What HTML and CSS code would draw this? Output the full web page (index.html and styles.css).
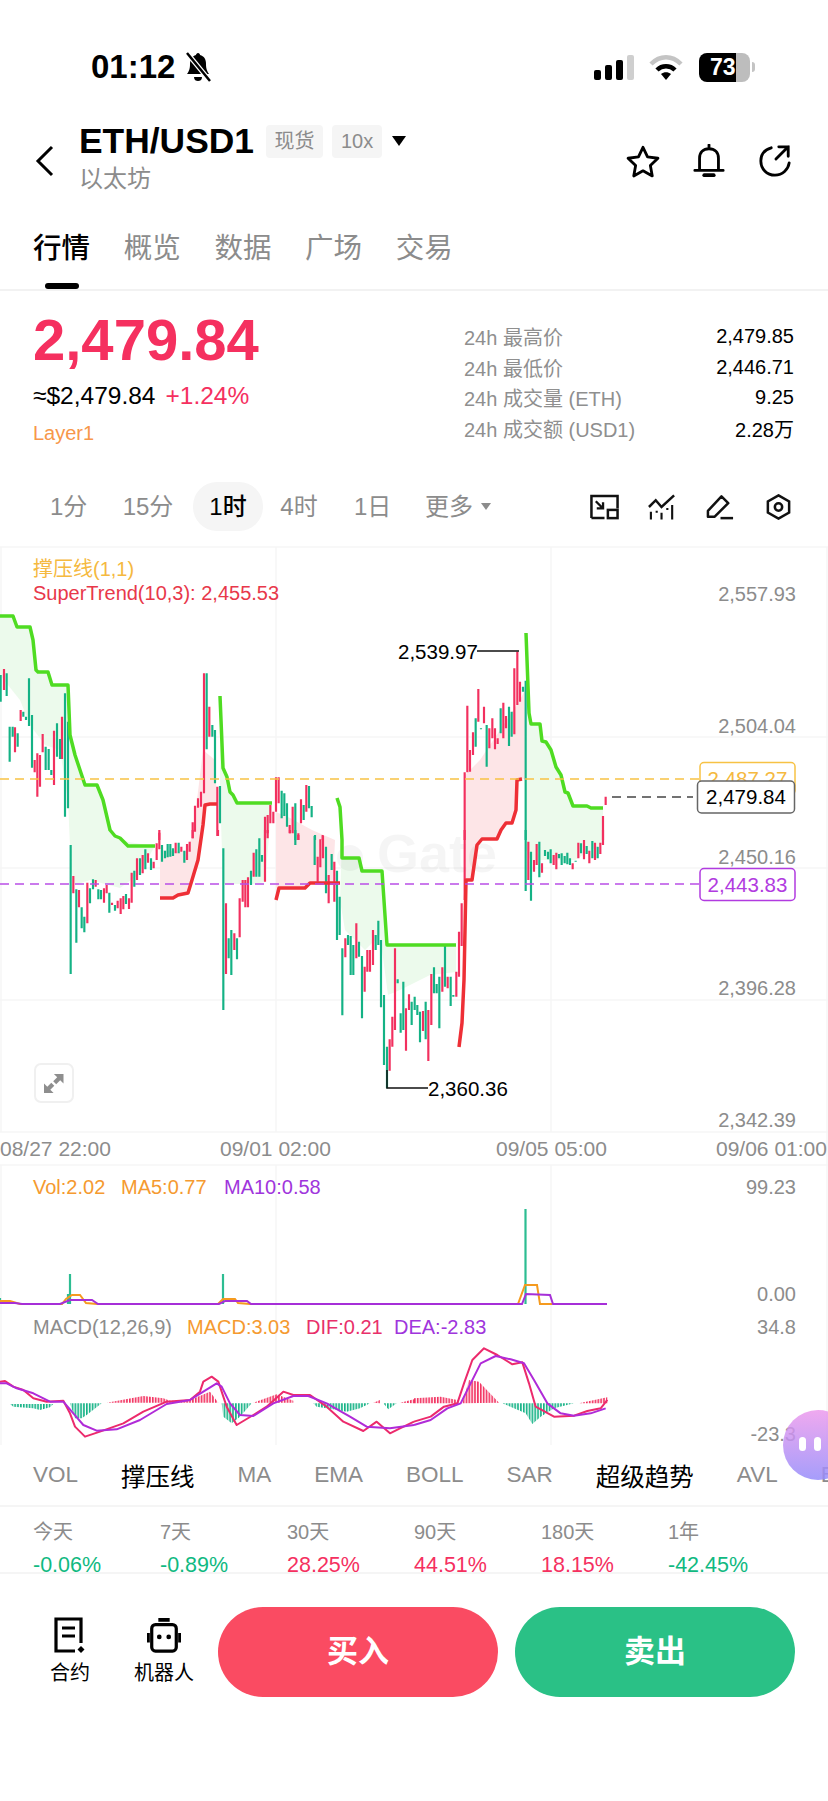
FILE: index.html
```html
<!DOCTYPE html>
<html>
<head>
    <title>ETH/USD1</title>
    <link rel="stylesheet" href="styles.css">
</head>
<body>
<div class="phone">
    <div class="status">
        <div class="status-left">
            <span class="clock">01:12</span>
            <svg class="mute" viewBox="0 0 28 30"><path d="M14 1c1.300 0 2 1 2 2 4 1 6 4 6 9 0 5 1 7 3 10H3c2-3 3-5 3-10 0-5 2-8 6-9 0-1 1-2 2-2z" fill="#000"/><path d="M10 25h8c0 3-2 4-4 4s-4-1-4-4z" fill="#000"/><path d="M3 1l23 28" stroke="#fff" stroke-width="5"/><path d="M3 1l23 28" stroke="#000" stroke-width="2.500"/></svg>
        </div>
        <div class="status-right">
            <svg class="signal" viewBox="0 0 40 25"><rect x="0" y="15" width="7" height="10" rx="2"/><rect x="11" y="10" width="7" height="15" rx="2"/><rect x="22" y="5" width="7" height="20" rx="2"/><rect x="33" y="0" width="7" height="25" rx="2" fill="#cfcfcf"/></svg>
            <svg class="wifi" viewBox="0 0 34 25"><path d="M2 9c9-9 21-9 30 0" fill="none" stroke="#c4c4c4" stroke-width="4.500"/><path d="M8 15c5-5 13-5 18 0" fill="none" stroke="#000" stroke-width="4.500"/><path d="M12 19c3-2.500 7-2.500 10 0l-5 6z"/></svg>
            <div class="battery">73</div>
            <div class="battery-nub"></div>
        </div>
    </div>

    <header class="pair">
        <svg class="back" viewBox="0 0 20 32"><path d="M17 2L3 16l14 14" fill="none" stroke="#000" stroke-width="3"/></svg>
        <div class="pair-name">
            <div class="pair-top">
                <h1>ETH/USD1</h1>
                <span class="chip chip-spot">现货</span>
                <span class="chip chip-lev">10x</span>
                <span class="caret"></span>
            </div>
            <div class="pair-sub">以太坊</div>
        </div>
        <div class="pair-icons">
            <svg class="pair-icon" viewBox="0 0 36 34"><path d="M18 2.500l4.800 10.200 11 1.400-8 7.700 2 11-9.800-5.400-9.800 5.400 2-11-8-7.700 11-1.400z" fill="none" stroke="#000" stroke-width="3" stroke-linejoin="round"/></svg>
            <svg class="pair-icon" viewBox="0 0 36 36"><path d="M18 1v4M8 27V15c0-6 4-10 10-10s10 4 10 10v12M3 28h30" fill="none" stroke="#000" stroke-width="3" stroke-linecap="round"/><path d="M13 33h10" stroke="#000" stroke-width="4" stroke-linecap="round"/></svg>
            <svg class="pair-icon" viewBox="0 0 36 36"><path d="M14 4C7 6 3 11 3 18c0 8 6 15 15 15 8 0 14-6 15-13" fill="none" stroke="#000" stroke-width="3" stroke-linecap="round"/><path d="M19 16L32 3M22 3h10v10" fill="none" stroke="#000" stroke-width="3" stroke-linecap="round"/></svg>
        </div>
    </header>

    <nav class="tabs">
        <a class="tab tab-on">行情</a>
        <a class="tab">概览</a>
        <a class="tab">数据</a>
        <a class="tab">广场</a>
        <a class="tab">交易</a>
    </nav>

    <section class="summary">
        <div class="price-box">
            <div class="price">2,479.84</div>
            <div class="price-sub"><span>≈$2,479.84</span><span class="up">+1.24%</span></div>
            <div class="sector">Layer1</div>
        </div>
        <div class="stats">
            <div class="stat"><span class="stat-label">24h 最高价</span><span>2,479.85</span></div>
            <div class="stat"><span class="stat-label">24h 最低价</span><span>2,446.71</span></div>
            <div class="stat"><span class="stat-label">24h 成交量 (ETH)</span><span>9.25</span></div>
            <div class="stat"><span class="stat-label">24h 成交额 (USD1)</span><span>2.28万</span></div>
        </div>
    </section>

    <section class="intervals">
        <a class="iv iv-1">1分</a>
        <a class="iv iv-2">15分</a>
        <a class="iv iv-on">1时</a>
        <a class="iv iv-4">4时</a>
        <a class="iv iv-5">1日</a>
        <a class="iv iv-more">更多<i class="iv-caret"></i></a>
        <div class="tools">
            <svg class="tool" viewBox="0 0 30 26"><path d="M1.500 24.500V1.500h27v13M15 24.500H1.500" fill="none" stroke="#111" stroke-width="2.600"/><rect x="18.500" y="16" width="10" height="8.500" fill="none" stroke="#111" stroke-width="2.600"/><path d="M6 7l7 7M13.500 8v6.500H7" fill="none" stroke="#111" stroke-width="2.400"/></svg>
            <svg class="tool" viewBox="0 0 30 26"><path d="M1 13l7-7 6 7L27 1" fill="none" stroke="#111" stroke-width="2.600"/><path d="M3 18v8M14 19v7M25 11v15M9 17v2M20 14v2" stroke="#111" stroke-width="2.200"/></svg>
            <svg class="tool" viewBox="0 0 30 26"><path d="M2 23V17L16 2l7 7L9 23z" fill="none" stroke="#111" stroke-width="2.600" stroke-linejoin="round"/><path d="M15 24.500h13" stroke="#111" stroke-width="2.600"/></svg>
            <svg class="tool" viewBox="0 0 30 26"><path d="M15 1l11 6.200v11.600L15 25 4 18.800V7.200z" fill="none" stroke="#111" stroke-width="2.600"/><circle cx="15" cy="13" r="3.800" fill="none" stroke="#111" stroke-width="2.600"/></svg>
        </div>
    </section>

    <section class="chart">
        <svg class="chart-svg" viewBox="0 546 828 899">
            <defs>
                <pattern id="stripe-r" patternUnits="userSpaceOnUse" width="8.600" height="10"><rect width="5" height="10" fill="#f2305f"/></pattern>
                <pattern id="stripe-g" patternUnits="userSpaceOnUse" width="8.600" height="10"><rect width="5" height="10" fill="#14b285"/></pattern>
            </defs>

            <!-- grid -->
            <path class="grid" d="M0 547H828M0 737H828M0 868H828M0 1000H828M0 1132H828M0 1165H828M276 547V1132M551 547V1132M827 547V1445M1 547V1132M276 1165V1445M551 1165V1445M1 1165V1445"/>

            <!-- supertrend fills -->
            <path class="fill-g" d="M0 616L13 616 17 627 30 627 33 640 36 670 48 672 52 685 68 685 70 735 75 755 80 770 85 785 97 785 103 800 110 830 120 838 128 842 155 846 138 875 120 888 90 880 75 885 71 870 68 800 60 750 45 745 30 725 20 700 0 675Z"/>
            <path class="fill-g" d="M220 696L223 768 227 777 230 792 233 795 237 803 272 803 265 882 253 884 223 884 220 790Z"/>
            <path class="fill-g" d="M342 840L342 858 359 858 362 871 382 871 387 945 456 945 456 972 430 975 400 990 388 995 380 935 365 950 345 930 340 900Z"/>
            <path class="fill-g" d="M526 633L529 713 531 724 540 724 542 741 546 742 551 750 556 767 561 775 565 792 568 793 573 806 587 806 591 808 603 808 603 843 575 860 530 860 526 850Z"/>
            <path class="fill-r" d="M160 850L185 852 193 835 197 800 203 750 215 760 217 804 205 805 203 825 198 860 192 880 188 893 178 895 173 898 160 898Z"/>
            <path class="fill-r" d="M276 812L290 818 312 830 335 840 333 883 310 883 307 887 279 888 276 900Z"/>
            <path class="fill-r" d="M465 775L480 760 520 700 525 690 525 779 517 780 516 810 512 823 506 823 501 830 497 839 482 839 477 845 472 880 466 880Z"/>

            <text class="watermark" x="377" y="872">Gate</text>
            <circle class="watermark" cx="350" cy="858" r="13"/>

            <!-- candles, upper part of the chart -->
            <g transform="translate(0 540) scale(.33333)">
                <path class="up-c" d="M12 387V450M62 510V543M45 562V637M128 582V637M112 640V770M104 660V697M120 645V740M162 572V735M186 530V657M612 400V760M628 500V590M652 740V888M578 847V895M585 797V875M594 775V803M603 755V800M795 830V900M803 825V895M811 795V850M820 815V850M828 712V815M836 712V790M869 855V880M878 800V880M895 880V900M903 778V850M919 735V815M968 885V900M478 878V900"/>
                <path class="dn-c" d="M2 405V485M20 400V468M29 560V665M38 560V590M53 580V620M70 515V530M78 530V540M87 415V558M96 525V683M137 620V690M146 627V690M154 690V705M171 550V650M180 597V657M195 460V830M204 545V805M620 400V628M637 555V590M645 570V730M660 738V850M845 752V835M853 760V828M861 790V860M886 790V900M911 795V840M927 738V805M935 798V832M945 885V900"/>
            </g>
            <g transform="translate(414 540) scale(.33333)">
                <path class="up-c" d="M152 697V900M160 497V697M168 630V695M177 577V645M193 447V545M210 500V550M226 565V625M235 535V595M243 565V628M251 595V612M268 488V595M276 528V565M301 385V583M310 335V495M318 425V485M575 770V795M567 828V900"/>
                <path class="dn-c" d="M185 535V620M201 565V568M218 555V680M260 505V580M285 500V618M293 515V590M327 440V455M335 422V900"/>
            </g>
            <!-- candles, lower part -->
            <g transform="translate(0 830) scale(.33333)">
                <path class="up-c" d="M220 138V190M237 180V232M262 158V280M287 150V170M312 175V218M320 165V190M336 218V225M353 212V235M362 205V252M370 198V238M387 205V237M395 128V218M411 85V150M428 75V130M444 70V98M461 95V115M470 40V90M478 0V58M527 38V70M544 50V65M561 42V90M569 35V65M578 0V25M654 0V18M678 220V432M703 310V360M719 205V322M728 150V215M736 150V232M744 142V232M761 68V140M795 0V155M803 0V10M870 0V10M895 15V30M953 80V155M961 28V112M969 18V85M986 135V220M1003 95V215M1036 325V382M1069 280V385M1094 410V485M1102 360V425M1110 360V425M1119 300V405M1169 628V722M1177 560V650M1185 355V600M1218 535V662M1227 493V540"/>
                <path class="dn-c" d="M212 45V432M229 178V338M245 232V295M253 260V307M270 175V220M279 148V178M295 178V208M303 180V208M328 188V248M345 225V242M378 192V222M403 122V170M420 85V135M436 58V118M453 85V120M486 45V95M495 62V85M503 42V82M511 42V80M519 55V78M536 38V70M553 62V98M670 55V540M686 325V385M694 300V435M711 325V388M753 122V165M769 58V140M778 25V140M786 75V95M886 0V45M944 18V105M978 50V190M995 72V120M1011 122V330M1019 200V315M1027 355V556M1044 315V345M1052 318V435M1060 345V435M1077 335V380M1086 378V565M1127 315V360M1135 272V345M1143 330V532M1152 495V705M1161 650V775M1193 448V460M1202 550V608M1210 455V600M1235 515V585"/>
            </g>
            <g transform="translate(414 830) scale(.33333)">
                <path class="up-c" d="M27 543V603M43 540V693M52 432V585M85 412V485M101 440V475M127 425V500M135 305V440M143 220V348M152 0V210M343 35V150M360 90V125M368 42V105M384 100V128M419 75V105M427 68V118M476 100V118M493 38V85M510 30V88M526 62V100M543 38V90M559 38V72M567 0V45"/>
                <path class="dn-c" d="M2 500V540M10 525V555M18 545V637M35 515V628M60 412V490M68 462V490M76 440V595M93 348V470M110 440V528M118 495V500M335 0V183M351 65V212M376 35V142M393 60V78M402 65V88M410 58V100M435 72V85M443 70V105M452 78V100M460 68V103M468 85V105M485 92V95M501 40V70M518 48V72M535 33V85M551 50V85"/>
            </g>

            <!-- supertrend lines -->
            <path class="st-g" d="M0 616L13 616 17 627 30 627 33 640 36 670 38 672 48 672 52 685 68 685 70 735 75 755 80 770 85 785 97 785 103 800 110 830 115 836 120 838 128 846 155 846"/>
            <path class="st-g" d="M220 696L223 768 227 777 230 792 233 795 237 803 272 803"/>
            <path class="st-g" d="M337 798L340 807 342 840 342 858 359 858 362 871 382 871 387 945 456 945"/>
            <path class="st-g" d="M526 633L529 713 531 724 540 724 542 741 546 742 551 750 556 767 561 775 565 792 568 793 573 806 587 806 591 808 603 808"/>
            <path class="st-r" d="M160 898L173 898 178 895 188 893 192 880 198 860 203 825 205 805 210 804 217 804"/>
            <path class="st-r" d="M276 900L279 888 305 888 310 883 340 883"/>
            <path class="st-r" d="M459 1047L462 1023 464 980 466 880 472 880 477 845 482 839 497 839 501 830 506 823 512 823 516 810 517 780 522 779"/>

            <!-- price lines -->
            <path class="dash-y" d="M0 779H700"/>
            <path class="dash-p" d="M0 884H700"/>
            <path class="dash-k" d="M612 797H693"/>

            <!-- high / low marks -->
            <path class="mark" d="M477 651H519M387 1070V1088H428"/>
            <text class="hilo" x="398" y="659">2,539.97</text>
            <text class="hilo" x="428" y="1096">2,360.36</text>

            <!-- legends -->
            <text class="lg lg-y" x="33" y="576">撑压线(1,1)</text>
            <text class="lg lg-r" x="33" y="600">SuperTrend(10,3): 2,455.53</text>

            <!-- y axis -->
            <text class="axis" x="796" y="601">2,557.93</text>
            <text class="axis" x="796" y="733">2,504.04</text>
            <text class="axis" x="796" y="864">2,450.16</text>
            <text class="axis" x="796" y="995">2,396.28</text>
            <text class="axis" x="796" y="1127">2,342.39</text>

            <!-- labels on the axis -->
            <rect class="box-y" x="700" y="762.500" width="95" height="32" rx="4"/>
            <text class="tag tag-y" x="747.500" y="786">2,487.27</text>
            <rect class="box-k" x="697.500" y="781" width="97" height="32" rx="4"/>
            <text class="tag tag-k" x="746" y="804">2,479.84</text>
            <rect class="box-p" x="700" y="868.500" width="95" height="32" rx="4"/>
            <text class="tag tag-p" x="747.500" y="892">2,443.83</text>

            <!-- expand button -->
            <rect class="expand" x="35" y="1064" width="38" height="38" rx="6"/>
            <path class="expand-i" d="M44 1093v-9.500l3.300 3.300 4-4 3 3-4 4 3.300 3.200zM63.500 1074v9.500l-3.300-3.300-4 4-3-3 4-4-3.300-3.200z"/>

            <!-- time axis -->
            <text class="time" x="0" y="1156">08/27 22:00</text>
            <text class="time" x="220" y="1156">09/01 02:00</text>
            <text class="time" x="496" y="1156">09/05 05:00</text>
            <text class="time" x="716" y="1156">09/06 01:00</text>

            <!-- volume pane -->
            <text class="lg lg-o" x="33" y="1194">Vol:2.02</text>
            <text class="lg lg-o" x="121" y="1194">MA5:0.77</text>
            <text class="lg lg-v" x="224" y="1194">MA10:0.58</text>
            <text class="axis" x="796" y="1194">99.23</text>
            <text class="axis" x="796" y="1301">0.00</text>
            <path class="vol-bar" d="M70 1274V1304M223 1274V1304M525.500 1209V1304M0 1298V1304M68 1294V1304"/>
            <path class="ma-o" d="M0 1301L10 1301 20 1304 62 1304 66 1299 72 1295 80 1295 86 1303 97 1304 218 1304 223 1299 235 1299 238 1303 250 1304 518 1304 525 1285 537 1285 540 1304 552 1304"/>
            <path class="ma-v" d="M0 1303L15 1303 22 1304 60 1304 70 1300 92 1300 98 1304 219 1304 225 1301 247 1301 251 1304 522 1304 526 1294 550 1295 553 1304 607 1304"/>

            <!-- macd pane -->
            <text class="lg lg-gray" x="33" y="1334">MACD(12,26,9)</text>
            <text class="lg lg-o" x="187" y="1334">MACD:3.03</text>
            <text class="lg lg-pk" x="306" y="1334">DIF:0.21</text>
            <text class="lg lg-v" x="394" y="1334">DEA:-2.83</text>
            <text class="axis" x="796" y="1334">34.8</text>
            <text class="axis" x="796" y="1441">-23.3</text>
            <g transform="translate(0 1150) scale(.33333)">
                <path fill="url(#stripe-g)" d="M30 762H160L150 772 120 780 100 775 40 770ZM210 760H305L260 795 245 805 225 805ZM665 760H755L720 800 695 820 670 800ZM940 760H1110L1080 775 1040 785 1000 778 950 770ZM1150 760H1190L1165 778Z"/>
                <path fill="url(#stripe-r)" d="M320 758L430 738 490 745 510 752 540 752 570 750 630 725 655 758ZM760 758L830 733 880 752 880 758ZM1120 758L1140 750 1140 760ZM1200 758L1242 748 1242 760Z"/>
                <path class="m-dif" d="M0 695L15 693 40 710 70 720 100 745 140 755 190 752 210 790 225 830 255 860 300 845 370 820 430 785 500 755 570 750 600 725 610 695 635 680 655 695 680 770 710 825 760 795 800 770 850 725 880 735 930 735 980 770 1030 815 1090 843 1130 815 1170 850 1200 835 1242 815"/>
                <path class="m-dea" d="M0 700L20 700 50 715 100 730 150 755 190 755 220 790 250 825 290 842 350 838 420 810 500 762 570 750 610 725 650 700 665 710 690 760 720 795 760 798 820 760 880 738 925 738 980 760 1050 800 1100 830 1170 835 1242 825"/>
            </g>
            <g transform="translate(414 1150) scale(.33333)">
                <path fill="url(#stripe-r)" d="M0 760V745L80 740 130 750 135 760ZM145 760L165 690 195 695 255 758ZM495 760L580 742V760Z"/>
                <path fill="url(#stripe-g)" d="M265 760H480L420 775 380 800 355 822 335 790 300 775Z"/>
                <path class="m-dif" d="M0 815L50 800 90 770 130 760 150 700 175 630 210 595 250 615 295 643 325 637 345 700 365 770 420 800 480 797 520 783 560 775 580 750"/>
                <path class="m-dea" d="M0 825L50 810 100 775 140 760 170 700 200 640 245 618 290 628 330 640 360 690 400 760 440 790 480 797 530 790 575 775"/>
            </g>
        </svg>
        <div class="bubble"><i></i><i></i></div>
    </section>

    <section class="indicators">
        <a>VOL</a>
        <a class="ind-on">撑压线</a>
        <a>MA</a>
        <a>EMA</a>
        <a>BOLL</a>
        <a>SAR</a>
        <a class="ind-on">超级趋势</a>
        <a>AVL</a>
        <a>BTI</a>
    </section>

    <section class="periods">
        <div class="period"><span>今天</span><b class="dn">-0.06%</b></div>
        <div class="period"><span>7天</span><b class="dn">-0.89%</b></div>
        <div class="period"><span>30天</span><b class="up">28.25%</b></div>
        <div class="period"><span>90天</span><b class="up">44.51%</b></div>
        <div class="period"><span>180天</span><b class="up">18.15%</b></div>
        <div class="period"><span>1年</span><b class="dn">-42.45%</b></div>
    </section>

    <footer class="actions">
        <a class="act act-contract">
            <svg class="act-icon" viewBox="0 0 34 36"><path d="M28 26V2H3v32h19" fill="none" stroke="#000" stroke-width="3.200"/><path d="M9 11h13M9 19h13" stroke="#000" stroke-width="3.200"/><path d="M28 29l3.500 3.500L28 36l-3.500-3.500z"/></svg>
            <span>合约</span>
        </a>
        <a class="act act-robot">
            <svg class="act-icon" viewBox="0 0 36 36"><path d="M12 2h12" stroke="#000" stroke-width="4"/><rect x="5" y="7" width="26" height="28" rx="4" fill="none" stroke="#000" stroke-width="3.400"/><path d="M1.500 16v10M34.500 16v10" stroke="#000" stroke-width="3"/><circle cx="13" cy="20" r="2.500"/><circle cx="23" cy="20" r="2.500"/></svg>
            <span>机器人</span>
        </a>
        <a class="trade trade-buy">买入</a>
        <a class="trade trade-sell">卖出</a>
    </footer>
</div>
</body>
</html>
```
FILE: styles.css
```css
* {
    box-sizing: border-box;
}
body {
    margin: 0;
    background: #fff;
    color: #000;
    font-family: "Liberation Sans", "Noto Sans CJK SC", sans-serif;
}
.phone {
    width: 828px;
    height: 1801px;
    overflow: hidden;
}

/* status bar */
.status {
    height: 112px;
    padding: 52px 73px 0 91px;
    display: flex;
    justify-content: space-between;
}
.status-left {
    display: flex;
    gap: 9px;
    height: 30px;
    align-items: center;
}
.clock {
    font-size: 33px;
    font-weight: 700;
}
.mute {
    width: 28px;
    height: 30px;
}
.status-right {
    display: flex;
    align-items: center;
    height: 30px;
}
.signal {
    width: 40px;
    height: 25px;
    margin-right: 15px;
}
.wifi {
    width: 34px;
    height: 25px;
    margin-right: 16px;
}
.battery {
    width: 51px;
    height: 29px;
    border-radius: 8px;
    background: linear-gradient(90deg, #000 73%, #bdbdbd 73%);
    color: #fff;
    font-size: 23px;
    font-weight: 700;
    line-height: 29px;
    padding-left: 11px;
}
.battery-nub {
    width: 3px;
    height: 10px;
    margin-left: 2px;
    border-radius: 0 3px 3px 0;
    background: #c4c4c4;
}

/* pair header */
.pair {
    height: 100px;
    position: relative;
    display: flex;
}
.back {
    width: 20px;
    height: 32px;
    margin: 33px 0 0 35px;
}
.pair-name {
    margin-left: 24px;
}
.pair-top {
    display: flex;
    align-items: center;
    height: 46px;
    margin-top: 6px;
}
h1 {
    margin: 0 12px 0 0;
    font-size: 35.400px;
    font-weight: 700;
    line-height: 46px;
}
.chip {
    height: 33px;
    line-height: 33px;
    text-align: center;
    background: #f5f5f5;
    border-radius: 4px;
    color: #8c8c8c;
    font-size: 20px;
}
.chip-spot {
    width: 57px;
}
.chip-lev {
    width: 50px;
    margin-left: 9px;
}
.caret {
    margin-left: 10px;
    border-left: 7px solid transparent;
    border-right: 7px solid transparent;
    border-top: 10px solid #000;
}
.pair-sub {
    margin-top: -2px;
    color: #8c8c8c;
    font-size: 24px;
    line-height: 34px;
}
.pair-icons {
    margin-left: auto;
    padding: 32px 36px 0 0;
    display: flex;
    gap: 32px;
}
.pair-icon {
    width: 34px;
    height: 34px;
}

/* tabs */
.tabs {
    height: 79px;
    padding: 0 0 0 33px;
    display: flex;
    gap: 33.700px;
    border-bottom: 2px solid #f2f2f2;
    font-size: 28.500px;
    color: #8c8c8c;
}
.tab {
    position: relative;
    line-height: 38px;
    padding-top: 17px;
}
.tab-on {
    color: #000;
    font-weight: 500;
}
.tab-on::after {
    content: "";
    position: absolute;
    left: 12px;
    width: 34px;
    bottom: 0;
    height: 6px;
    border-radius: 3px;
    background: #000;
}

/* price block */
.summary {
    height: 179px;
    padding: 0 34px 0 33px;
    display: flex;
    justify-content: space-between;
}
.price {
    margin-top: 16px;
    color: #f5305f;
    font-size: 58px;
    font-weight: 700;
    line-height: 66px;
}
.price-sub {
    margin-top: 9px;
    display: flex;
    gap: 10px;
    font-size: 24.500px;
    line-height: 28px;
}
.up {
    color: #f5305f;
}
.dn {
    color: #10b981;
}
.sector {
    margin-top: 10px;
    color: #f7974a;
    font-size: 20px;
    line-height: 26px;
}
.stats {
    width: 330px;
    padding-top: 30px;
}
.stat {
    height: 30.700px;
    display: flex;
    justify-content: space-between;
    align-items: center;
    font-size: 20px;
}
.stat-label {
    color: #8f8f8f;
}

/* interval row */
.intervals {
    height: 76px;
    position: relative;
    display: flex;
    align-items: flex-start;
    padding-top: 12px;
    font-size: 24px;
    color: #8c8c8c;
    white-space: nowrap;
}
.iv {
    height: 49px;
    line-height: 49px;
    text-align: center;
}
.iv-1 {
    width: 36px;
    margin-left: 50px;
}
.iv-2 {
    width: 52px;
    margin-left: 36px;
}
.iv-on {
    width: 70px;
    margin-left: 19px;
    background: #f5f5f5;
    border-radius: 24px;
    color: #000;
    font-weight: 500;
}
.iv-4 {
    width: 38px;
    margin-left: 17px;
}
.iv-5 {
    width: 36px;
    margin-left: 36px;
}
.iv-more {
    margin-left: 35px;
    display: flex;
    align-items: center;
}
.iv-caret {
    margin-left: 8px;
    border-left: 5px solid transparent;
    border-right: 5px solid transparent;
    border-top: 7px solid #8c8c8c;
}
.tools {
    margin-left: auto;
    padding: 12px 35px 0 0;
    display: flex;
    gap: 29px;
}
.tool {
    width: 29px;
    height: 26px;
}

/* chart */
.chart {
    position: relative;
    height: 899px;
}
.chart-svg {
    display: block;
    width: 828px;
    height: 899px;
}
.chart-svg text {
    font-size: 20px;
}
.chart-svg .time {
    font-size: 21px;
}
.chart-svg .hilo,
.chart-svg .tag {
    font-size: 20.500px;
}
.grid {
    stroke: #f6f6f6;
    stroke-width: 1.500;
    fill: none;
}
.chart-svg .watermark {
    fill: rgba(0, 0, 0, 0.04);
    font-size: 54px;
    font-weight: 700;
}
.fill-g {
    fill: #ecfaec;
}
.fill-r {
    fill: #fde5e7;
}
.up-c,
.dn-c {
    fill: none;
    stroke-width: 6.500;
}
.up-c {
    stroke: #f2305f;
}
.dn-c {
    stroke: #14b285;
}
.st-g,
.st-r {
    fill: none;
    stroke-width: 3.500;
    stroke-linejoin: round;
}
.st-g {
    stroke: #4fdc22;
}
.st-r {
    stroke: #ee2f36;
}
.dash-y,
.dash-p,
.dash-k {
    fill: none;
    stroke-width: 1.500;
    stroke-dasharray: 9 6;
}
.dash-y {
    stroke: #f7c244;
}
.dash-p {
    stroke: #b94fe6;
}
.dash-k {
    stroke: #444;
}
.mark {
    fill: none;
    stroke: #111;
    stroke-width: 1.500;
}
.hilo {
    fill: #000;
}
.lg-y {
    fill: #f5b93f;
}
.lg-r {
    fill: #e8384a;
}
.lg-o {
    fill: #f59a30;
}
.lg-v {
    fill: #a035dc;
}
.lg-pk {
    fill: #e8306a;
}
.lg-gray,
.axis,
.time {
    fill: #8c8c8c;
}
.axis {
    text-anchor: end;
}
.tag {
    text-anchor: middle;
}
.box-y,
.box-k,
.box-p {
    fill: #fff;
    stroke-width: 1.500;
}
.box-y {
    stroke: #f7c244;
}
.box-k {
    stroke: #666;
}
.box-p {
    stroke: #b13be0;
}
.tag-y {
    fill: #f5b93f;
}
.tag-k {
    fill: #000;
}
.tag-p {
    fill: #b13be0;
}
.expand {
    fill: #fff;
    stroke: #f0f0f0;
    stroke-width: 2;
}
.expand-i {
    fill: #8e8e8e;
}
.vol-bar {
    fill: none;
    stroke: #2dbd92;
    stroke-width: 2.200;
}
.ma-o,
.ma-v {
    fill: none;
    stroke-width: 2;
}
.ma-o {
    stroke: #f59a1e;
}
.ma-v {
    stroke: #a62fd8;
}
.m-dif,
.m-dea {
    fill: none;
    stroke-width: 6;
    stroke-linejoin: round;
}
.m-dif {
    stroke: #ec2a6c;
}
.m-dea {
    stroke: #b02bd8;
}
.bubble {
    position: absolute;
    left: 783px;
    top: 864px;
    width: 70px;
    height: 70px;
    border-radius: 50%;
    background: linear-gradient(180deg, rgba(236, 150, 236, 0.82), rgba(150, 140, 250, 0.85));
    display: flex;
    gap: 8px;
    padding: 27px 0 0 16px;
}
.bubble i {
    width: 7px;
    height: 14px;
    border-radius: 4px;
    background: #fff;
}

/* indicator tabs */
.indicators {
    height: 62px;
    padding-left: 33px;
    display: flex;
    gap: 43px;
    align-items: center;
    border-bottom: 2px solid #f5f5f5;
    font-size: 22.500px;
    color: #8c8c8c;
    white-space: nowrap;
    overflow: hidden;
}
.ind-on {
    color: #000;
    font-size: 24.500px;
}

/* period changes */
.periods {
    height: 67px;
    padding: 9px 0 0 33px;
    display: flex;
    border-bottom: 2px solid #f5f5f5;
}
.period {
    width: 127px;
    display: flex;
    flex-direction: column;
    font-size: 20px;
    color: #8c8c8c;
}
.period span {
    line-height: 32px;
}
.period b {
    font-size: 21.500px;
    font-weight: 400;
    line-height: 34px;
}

/* bottom actions */
.actions {
    height: 227px;
    position: relative;
    display: flex;
    align-items: flex-start;
    padding-top: 33px;
}
.act {
    display: flex;
    flex-direction: column;
    align-items: center;
    font-size: 20px;
    padding-top: 10px;
}
.act span {
    margin-top: 6px;
    line-height: 28px;
}
.act-icon {
    width: 34px;
    height: 36px;
}
.act-contract {
    width: 60px;
    margin-left: 40px;
}
.act-robot {
    width: 64px;
    margin-left: 32px;
}
.trade {
    height: 90px;
    width: 280px;
    border-radius: 45px;
    color: #fff;
    text-align: center;
    font-size: 31px;
    font-weight: 700;
    line-height: 90px;
}
.trade-buy {
    margin-left: 22px;
    background: #fa4b62;
}
.trade-sell {
    margin-left: 17px;
    background: #2ac186;
}
```
